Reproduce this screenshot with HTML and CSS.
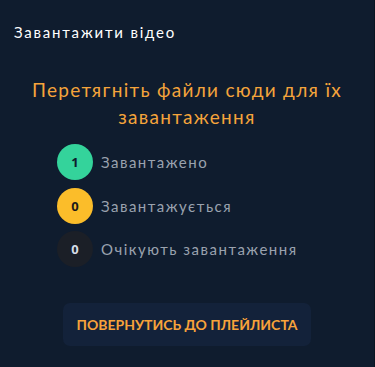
FILE: index.html
```html
<!DOCTYPE html>
<html lang="uk">
<head>
<meta charset="utf-8">
<title>Завантажити відео</title>
<link rel="stylesheet" href="styles.css">
</head>
<body>
<div class="page">
  <div class="title">Завантажити відео</div>
  <div class="heading">Перетягніть файли сюди для їх<br>завантаження</div>
  <ul class="status-list">
    <li class="status"><span class="badge badge-done">1</span><span class="label">Завантажено</span></li>
    <li class="status"><span class="badge badge-progress">0</span><span class="label">Завантажується</span></li>
    <li class="status"><span class="badge badge-wait">0</span><span class="label">Очікують завантаження</span></li>
  </ul>
  <div class="actions">
    <button class="back-btn" type="button">Повернутись до плейлиста</button>
  </div>
</div>
</body>
</html>
```

FILE: styles.css
```css
html, body {
  margin: 0;
  padding: 0;
  background: #0f1c2e;
}
body {
  font-family: Lato, "Noto Sans", sans-serif;
  width: 375px;
  height: 367px;
  overflow: hidden;
  border-right: 1px solid #0a1522;
  box-sizing: border-box;
}
.page {
  padding: 22px 14px 0;
  display: flex;
  flex-direction: column;
}
.title {
  color: #ffffff;
  font-size: 15px;
  line-height: 20px;
  letter-spacing: 1.8px;
}
.heading {
  margin-top: 34px;
  color: #f5a43b;
  font-size: 19px;
  line-height: 27px;
  letter-spacing: 1.3px;
  text-align: center;
}
.status-list {
  list-style: none;
  margin: 14px 0 0 43px;
  padding: 0;
  display: flex;
  flex-direction: column;
  gap: 7.5px;
}
.status {
  display: flex;
  align-items: center;
  gap: 8px;
}
.badge {
  width: 36px;
  height: 36px;
  border-radius: 50%;
  display: flex;
  align-items: center;
  justify-content: center;
  font-size: 13px;
  font-weight: 700;
  font-family: "Noto Sans", sans-serif;
}
.badge-done { background: #34d39b; color: #0f1c2e; }
.badge-progress { background: #fbbd2a; color: #1a1a1a; }
.badge-wait { background: #1b1f27; color: #d5dde8; }
.label {
  color: #9aa2ae;
  font-size: 15px;
  letter-spacing: 1.5px;
}
.actions {
  margin-top: 36px;
  display: flex;
  justify-content: center;
}
.back-btn {
  width: 248px;
  height: 43px;
  border: none;
  border-radius: 7px;
  background: #13223a;
  color: #f8a33a;
  font-family: Lato, "Noto Sans", sans-serif;
  font-weight: 700;
  font-size: 14px;
  text-transform: uppercase;
  padding: 0;
}
```
